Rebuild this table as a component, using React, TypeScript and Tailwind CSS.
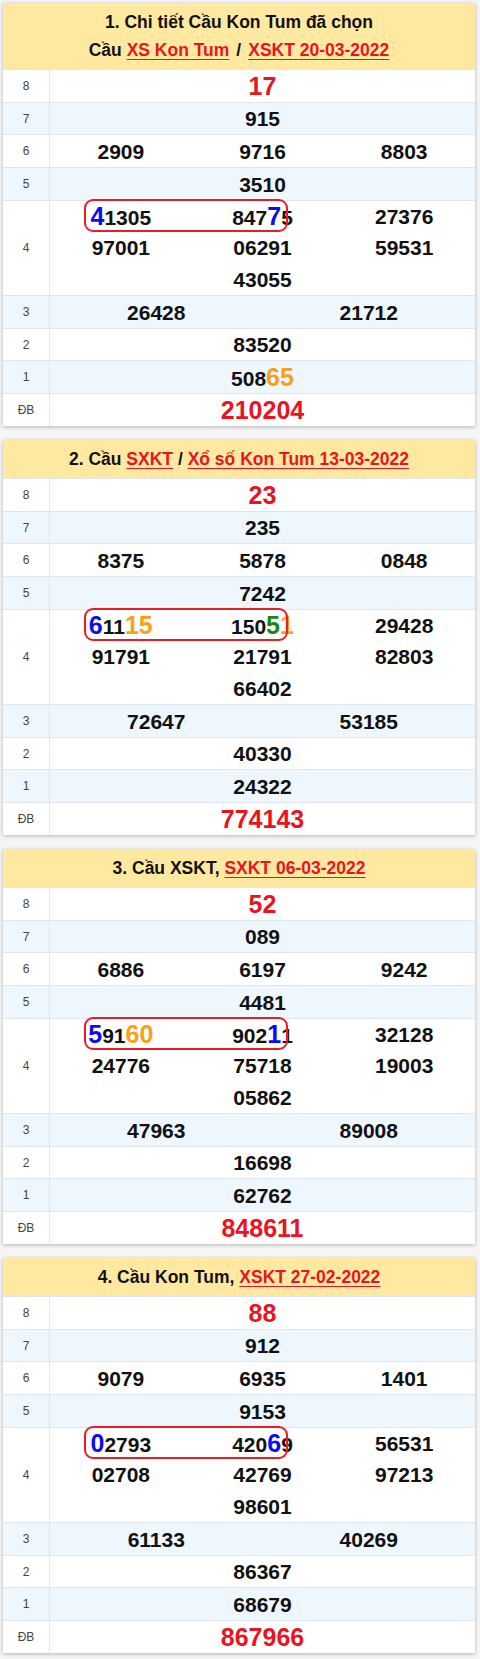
import type { ReactNode } from 'react';

type Seg = [string, ('b' | 'o' | 'g')?];
type Num = string | Seg[];

type Board = {
  title: ReactNode;
  g8: string;
  g7: string;
  g6: string[];
  g5: string;
  g4: Num[];
  g3: string[];
  g2: string;
  g1: Num;
  db: string;
};

const hi = {
  b: 'text-[#0b0bf5]',
  o: 'text-[#f9a01b]',
  g: 'text-[#138a13]',
};

const Link = ({ children }: { children: ReactNode }) => (
  <span className="text-[#e8141f] underline decoration-1 underline-offset-[3px]">{children}</span>
);

const boards: Board[] = [
  {
    title: (
      <>
        <div>1. Chi tiết Cầu Kon Tum đã chọn</div>
        <div>
          Cầu <Link>XS Kon Tum</Link>
          <span className="mx-[7px]">/</span>
          <Link>XSKT 20-03-2022</Link>
        </div>
      </>
    ),
    g8: '17',
    g7: '915',
    g6: ['2909', '9716', '8803'],
    g5: '3510',
    g4: [
      [['4', 'b'], ['1305']],
      [['847'], ['7', 'b'], ['5']],
      '27376',
      '97001',
      '06291',
      '59531',
      '43055',
    ],
    g3: ['26428', '21712'],
    g2: '83520',
    g1: [['508'], ['65', 'o']],
    db: '210204',
  },
  {
    title: (
      <div>
        2. Cầu <Link>SXKT</Link> / <Link>Xổ số Kon Tum 13-03-2022</Link>
      </div>
    ),
    g8: '23',
    g7: '235',
    g6: ['8375', '5878', '0848'],
    g5: '7242',
    g4: [
      [['6', 'b'], ['11'], ['15', 'o']],
      [['150'], ['5', 'g'], ['1', 'o']],
      '29428',
      '91791',
      '21791',
      '82803',
      '66402',
    ],
    g3: ['72647', '53185'],
    g2: '40330',
    g1: '24322',
    db: '774143',
  },
  {
    title: (
      <div>
        3. Cầu XSKT, <Link>SXKT 06-03-2022</Link>
      </div>
    ),
    g8: '52',
    g7: '089',
    g6: ['6886', '6197', '9242'],
    g5: '4481',
    g4: [
      [['5', 'b'], ['91'], ['60', 'o']],
      [['902'], ['1', 'b'], ['1']],
      '32128',
      '24776',
      '75718',
      '19003',
      '05862',
    ],
    g3: ['47963', '89008'],
    g2: '16698',
    g1: '62762',
    db: '848611',
  },
  {
    title: (
      <div>
        4. Cầu Kon Tum, <Link>XSKT 27-02-2022</Link>
      </div>
    ),
    g8: '88',
    g7: '912',
    g6: ['9079', '6935', '1401'],
    g5: '9153',
    g4: [
      [['0', 'b'], ['2793']],
      [['420'], ['6', 'b'], ['9']],
      '56531',
      '02708',
      '42769',
      '97213',
      '98601',
    ],
    g3: ['61133', '40269'],
    g2: '86367',
    g1: '68679',
    db: '867966',
  },
];

function Number({ n, big }: { n: Num; big?: boolean }) {
  if (typeof n === 'string') {
    return (
      <span className={big ? 'text-[25px] font-bold text-[#e8141f]' : 'text-[21px] font-bold text-[#111]'}>{n}</span>
    );
  }
  return (
    <span className="text-[21px] font-bold text-[#111]">
      {n.map(([t, c], i) =>
        c ? (
          <span key={i} className={`text-[25px] ${hi[c]}`}>
            {t}
          </span>
        ) : (
          <span key={i}>{t}</span>
        ),
      )}
    </span>
  );
}

function Row({ label, blue, h, children }: { label: string; blue?: boolean; h: string; children: ReactNode }) {
  return (
    <div className={`flex border-t border-[#dfe6ee] ${h} ${blue ? 'bg-[#eef6fe]' : 'bg-white'}`}>
      <div className="flex w-[47px] shrink-0 items-center justify-center border-r border-[#dfe6ee] text-[12px] text-[#444]">
        {label}
      </div>
      <div className="relative flex-1">{children}</div>
    </div>
  );
}

const Center = ({ children }: { children: ReactNode }) => (
  <div className="flex h-full items-center justify-center leading-none">{children}</div>
);

function Table({ b }: { b: Board }) {
  return (
    <div className="overflow-hidden bg-white shadow-[0_1px_4px_rgba(0,0,0,0.28)]">
      <div className="bg-[#ffe9a1] py-[5px] text-center text-[17.5px] leading-[28px] font-bold text-[#111]">
        {b.title}
      </div>
      <Row label="8" h="h-[33px]">
        <Center>
          <Number n={b.g8} big />
        </Center>
      </Row>
      <Row label="7" blue h="h-[32px]">
        <Center>
          <Number n={b.g7} />
        </Center>
      </Row>
      <Row label="6" h="h-[33px]">
        <div className="grid h-full grid-cols-3 items-center text-center leading-none">
          {b.g6.map((n) => (
            <div key={n}>
              <Number n={n} />
            </div>
          ))}
        </div>
      </Row>
      <Row label="5" blue h="h-[33px]">
        <Center>
          <Number n={b.g5} />
        </Center>
      </Row>
      <Row label="4" h="h-[95px]">
        <div className="grid h-full grid-cols-3 grid-rows-3 items-center text-center leading-none">
          {b.g4.map((n, i) => (
            <div key={i} className={i === 6 ? 'col-start-2' : ''}>
              <Number n={n} />
            </div>
          ))}
        </div>
        <div className="absolute top-[-2px] left-[34px] z-10 h-[33px] w-[204px] rounded-[9px] border-2 border-[#ec1c24]" />
      </Row>
      <Row label="3" blue h="h-[33px]">
        <div className="grid h-full grid-cols-2 items-center text-center leading-none">
          {b.g3.map((n) => (
            <div key={n}>
              <Number n={n} />
            </div>
          ))}
        </div>
      </Row>
      <Row label="2" h="h-[32px]">
        <Center>
          <Number n={b.g2} />
        </Center>
      </Row>
      <Row label="1" blue h="h-[33px]">
        <Center>
          <Number n={b.g1} />
        </Center>
      </Row>
      <Row label="ĐB" h="h-[33px]">
        <Center>
          <Number n={b.db} big />
        </Center>
      </Row>
    </div>
  );
}

export default function App() {
  return (
    <div className="min-h-screen bg-[#f6f6f6] pt-[3px] pr-[5px] pl-[3px] font-['Liberation_Sans',Arial,sans-serif]">
      <div className="flex flex-col gap-[14px]">
        {boards.map((b, i) => (
          <Table key={i} b={b} />
        ))}
      </div>
    </div>
  );
}
